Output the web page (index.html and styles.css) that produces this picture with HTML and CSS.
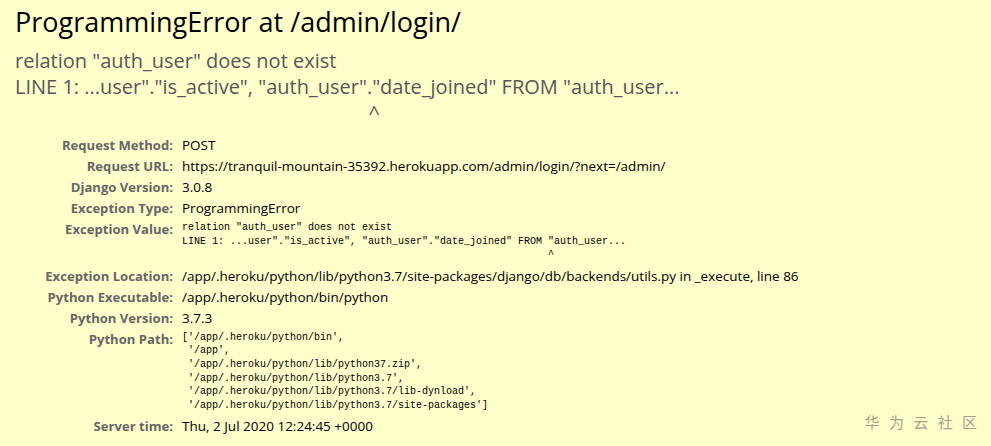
FILE: index.html
```
<!DOCTYPE html>
<html lang="en">
<head>
    <meta charset="UTF-8">
    <title>ProgrammingError at /admin/login/</title>
    <link rel="stylesheet" href="styles.css">
</head>
<body>
    <div id="summary">
        <h1>ProgrammingError at /admin/login/</h1>
        <pre class="exception_value">relation "auth_user" does not exist
LINE 1: ...user"."is_active", "auth_user"."date_joined" FROM "auth_user...
<span class="caret">                                                             ^</span></pre>
        <table class="meta">
            <tr><th>Request Method:</th><td>POST</td></tr>
            <tr><th>Request URL:</th><td>https://tranquil-mountain-35392.herokuapp.com/admin/login/?next=/admin/</td></tr>
            <tr><th>Django Version:</th><td>3.0.8</td></tr>
            <tr><th>Exception Type:</th><td>ProgrammingError</td></tr>
            <tr><th>Exception Value:</th><td><pre>relation "auth_user" does not exist
LINE 1: ...user"."is_active", "auth_user"."date_joined" FROM "auth_user...
                                                             ^</pre></td></tr>
            <tr><th>Exception Location:</th><td>/app/.heroku/python/lib/python3.7/site-packages/django/db/backends/utils.py in _execute, line 86</td></tr>
            <tr><th>Python Executable:</th><td>/app/.heroku/python/bin/python</td></tr>
            <tr><th>Python Version:</th><td>3.7.3</td></tr>
            <tr><th>Python Path:</th><td><pre>['/app/.heroku/python/bin',
 '/app',
 '/app/.heroku/python/lib/python37.zip',
 '/app/.heroku/python/lib/python3.7',
 '/app/.heroku/python/lib/python3.7/lib-dynload',
 '/app/.heroku/python/lib/python3.7/site-packages']</pre></td></tr>
            <tr><th>Server time:</th><td>Thu, 2 Jul 2020 12:24:45 +0000</td></tr>
        </table>
    </div>
    <div class="watermark">华 为 云 社 区</div>
</body>
</html>
```
FILE: styles.css
```
html, body { margin: 0; padding: 0; }
body { font: 13.5px "Open Sans", sans-serif; background: #ffffcc; color: #000; }

#summary {
    padding: 6px 15px 20px;
}

h1 {
    font-weight: normal;
    font-size: 27px;
    line-height: 32px;
    margin: 0 0 10px;
}

pre.exception_value {
    font-family: "Open Sans", sans-serif;
    color: #575757;
    font-size: 20px;
    line-height: 26px;
    margin: 0 0 9px;
}

pre.exception_value .caret {
    letter-spacing: 0.6px;
}

table.meta {
    border-collapse: collapse;
    border: none;
}

table.meta th {
    width: 158px;
    text-align: right;
    color: #666;
    font-size: 13.1px;
    font-weight: bold;
    padding: 0 9px 0 0;
    vertical-align: top;
    line-height: 21px;
}

table.meta td {
    padding: 0;
    line-height: 21px;
    vertical-align: top;
}

table.meta td pre {
    font-family: "Liberation Mono", monospace;
    font-size: 10px;
    line-height: 13.6px;
    margin: 0;
    padding: 2px 0 4px;
}

.watermark {
    position: absolute;
    right: 11px;
    bottom: 14px;
    font-family: "Noto Sans CJK SC", sans-serif;
    font-size: 15px;
    letter-spacing: 3px;
    color: #a3a38a;
}
```
